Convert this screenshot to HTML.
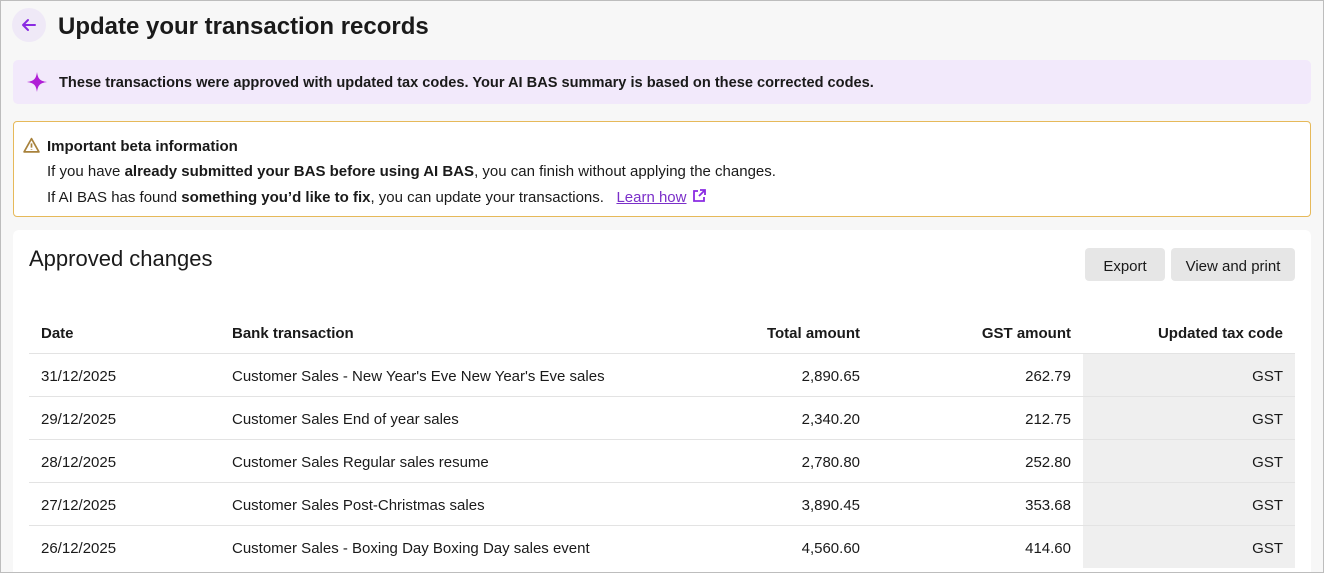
<!DOCTYPE html>
<html style="overflow:hidden;background:#f7f7f7"><head><meta charset="utf-8"><style>
*{box-sizing:border-box;margin:0;padding:0}
html,body{width:1324px;height:573px;overflow:hidden}
body{background:#f7f7f7;font-family:"Liberation Sans",sans-serif;color:#1a1a1a;position:relative}
.frame{position:absolute;left:0;top:0;width:1324px;height:573px;border:1px solid #bdbdbd;pointer-events:none}
.back{position:absolute;left:12px;top:8px;width:34px;height:34px;border-radius:50%;background:#efe9f7}
h1{position:absolute;left:58px;top:13px;font-size:24px;font-weight:700}
.banner{position:absolute;left:13px;top:60px;width:1298px;height:44px;background:#f2e9fb;border-radius:5px;font-size:14.6px;font-weight:700;padding:15px 0 0 46px}
.warn{position:absolute;left:13px;top:121px;width:1298px;height:96px;background:#fff;border:1px solid #e6b95a;border-radius:4px;font-size:15px}
.warn div{position:absolute;left:33px}
.card{position:absolute;left:13px;top:230px;width:1298px;height:350px;background:#fff;border-radius:6px}
.card h2{position:absolute;left:16px;top:16px;font-size:22px;font-weight:400}
.btn{position:absolute;top:18px;height:33px;background:#e6e6e6;border-radius:4px;font-size:15px;padding-top:10px;text-align:center}
table{position:absolute;left:16px;top:80px;width:1266px;border-collapse:collapse;font-size:15px}
td,th{height:43px;padding:4px 12px 0;vertical-align:middle;text-align:left}
th{font-weight:700;height:43px}
tbody td{border-top:1px solid #e3e3e3}
.r{text-align:right}
.g{background:#efefef}
</style></head><body>
<div class="back"><svg width="34" height="34" viewBox="0 0 34 34"><path d="M23 17H11M16 12l-5 5 5 5" stroke="#8a2be2" stroke-width="2" fill="none" stroke-linecap="round" stroke-linejoin="round"/></svg></div>
<h1>Update your transaction records</h1>
<div class="banner"><svg style="position:absolute;left:13px;top:11px" width="22" height="22" viewBox="0 0 22 22"><path d="M11 1C12 8 14 10 21 11C14 12 12 14 11 21C10 14 8 12 1 11C8 10 10 8 11 1Z" fill="#b01fd6"/></svg>These transactions were approved with updated tax codes. Your AI BAS summary is based on these corrected codes.</div>
<div class="warn">
<svg style="position:absolute;left:9px;top:15px" width="17" height="16" viewBox="0 0 16 15"><path d="M8 1.5L15 14H1Z" fill="none" stroke="#a8823c" stroke-width="1.6" stroke-linejoin="round"/><path d="M8 6v4M8 11.6v.6" stroke="#a8823c" stroke-width="1.6"/></svg>
<div style="top:16px;font-weight:700">Important beta information</div>
<div style="top:41px">If you have <b>already submitted your BAS before using AI BAS</b>, you can finish without applying the changes.</div>
<div style="top:66px">If AI BAS has found <b>something you’d like to fix</b>, you can update your transactions. &nbsp;&nbsp;<span style="color:#7b2fc9;text-decoration:underline">Learn how</span> <svg width="16" height="16" viewBox="0 0 16 16" style="vertical-align:-2px"><path d="M7 3H3v10h10V9M9 2h5v5M14 2L8 8" stroke="#8a2be2" stroke-width="1.8" fill="none"/></svg></div>
</div>
<div class="card">
<h2>Approved changes</h2>
<div class="btn" style="left:1072px;width:80px">Export</div>
<div class="btn" style="left:1158px;width:124px">View and print</div>
<table>
<thead><tr><th style="width:191px">Date</th><th>Bank transaction</th><th class="r">Total amount</th><th class="r" style="width:211px">GST amount</th><th class="r" style="width:212px">Updated tax code</th></tr></thead>
<tbody>
<tr><td>31/12/2025</td><td>Customer Sales - New Year's Eve New Year's Eve sales</td><td class="r">2,890.65</td><td class="r">262.79</td><td class="r g">GST</td></tr>
<tr><td>29/12/2025</td><td>Customer Sales End of year sales</td><td class="r">2,340.20</td><td class="r">212.75</td><td class="r g">GST</td></tr>
<tr><td>28/12/2025</td><td>Customer Sales Regular sales resume</td><td class="r">2,780.80</td><td class="r">252.80</td><td class="r g">GST</td></tr>
<tr><td>27/12/2025</td><td>Customer Sales Post-Christmas sales</td><td class="r">3,890.45</td><td class="r">353.68</td><td class="r g">GST</td></tr>
<tr><td>26/12/2025</td><td>Customer Sales - Boxing Day Boxing Day sales event</td><td class="r">4,560.60</td><td class="r">414.60</td><td class="r g">GST</td></tr>
</tbody></table>
</div>
<div class="frame"></div>
</body></html>
